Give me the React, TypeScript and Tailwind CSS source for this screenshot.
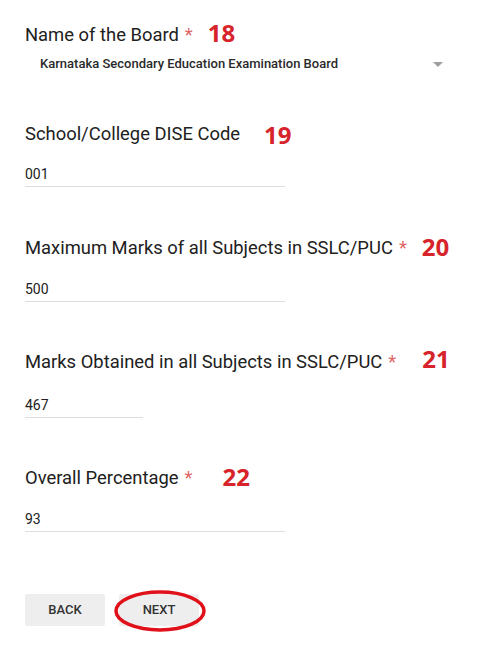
import React from "react";

const Num = ({ n, ml, dy }: { n: string; ml: string; dy: string }) => (
  <span
    className={`relative font-bold text-[24px] leading-6 text-[#d7232a] ${ml} ${dy}`}
    style={{ fontFamily: '"Open Sans", sans-serif' }}
  >
    {n}
  </span>
);

const Star = () => <span className="ml-[6px] text-[#e06666]">*</span>;

export default function App() {
  return (
    <div
      className="w-[500px] h-[650px] bg-white px-[25px] pt-[20px] text-[#212121]"
      style={{ fontFamily: "Roboto, sans-serif" }}
    >
      {/* Field 1 */}
      <div className="flex items-baseline h-6 text-[18.4px] leading-6">
        <span>Name of the Board</span>
        <Star />
        <Num n="18" ml="ml-[15px]" dy="top-[1px]" />
      </div>
      <div className="mt-[10px] h-5 flex items-center justify-between pl-[15px] pr-[32px]">
        <span className="text-[13px] leading-5 font-medium text-[#2a2a2a]">
          Karnataka Secondary Education Examination Board
        </span>
        <span className="w-0 h-0 border-l-[5px] border-r-[5px] border-t-[5px] border-l-transparent border-r-transparent border-t-[#9e9e9e]" />
      </div>

      {/* Field 2 */}
      <div className="mt-[45px] flex items-baseline h-6 text-[18.4px] leading-6">
        <span>School/College DISE Code</span>
        <Num n="19" ml="ml-[24px]" dy="top-[4px]" />
      </div>
      <div className="mt-[21px] w-[260px] pb-[2px] border-b border-[#dedede] text-[14px] leading-5">
        001
      </div>

      {/* Field 3 */}
      <div className="mt-[46px] flex items-baseline h-6 text-[18.4px] leading-6">
        <span>Maximum Marks of all Subjects in SSLC/PUC</span>
        <Star />
        <Num n="20" ml="ml-[15px]" dy="top-[2px]" />
      </div>
      <div className="mt-[22px] w-[260px] pb-[2px] border-b border-[#dedede] text-[14px] leading-5">
        500
      </div>

      {/* Field 4 */}
      <div className="mt-[45px] flex items-baseline h-6 text-[18.4px] leading-6">
        <span>Marks Obtained in all Subjects in SSLC/PUC</span>
        <Star />
        <Num n="21" ml="ml-[26px]" dy="top-0" />
      </div>
      <div className="mt-[24px] w-[118px] pb-[2px] border-b border-[#dedede] text-[14px] leading-5">
        467
      </div>

      {/* Field 5 */}
      <div className="mt-[45px] flex items-baseline h-6 text-[18.4px] leading-6">
        <span>Overall Percentage</span>
        <Star />
        <Num n="22" ml="ml-[30px]" dy="top-[2px]" />
      </div>
      <div className="mt-[22px] w-[260px] pb-[2px] border-b border-[#dedede] text-[14px] leading-5">
        93
      </div>

      {/* Buttons */}
      <div className="mt-[62px] flex gap-[14px]">
        <button className="w-[80px] h-[32px] rounded-[2px] bg-[#eeeeee] text-[13px] font-medium text-[#333]">
          BACK
        </button>
        <div className="relative">
          <button className="w-[80px] h-[32px] rounded-[2px] bg-[#eeeeee] text-[13px] font-medium text-[#333]">
            NEXT
          </button>
          <svg
            className="absolute left-[-5px] top-[-4px] pointer-events-none"
            width="92"
            height="42"
            viewBox="0 0 92 42"
          >
            <ellipse cx="46" cy="21" rx="44" ry="19" fill="none" stroke="#e0111b" strokeWidth="3.5" />
          </svg>
        </div>
      </div>
    </div>
  );
}
